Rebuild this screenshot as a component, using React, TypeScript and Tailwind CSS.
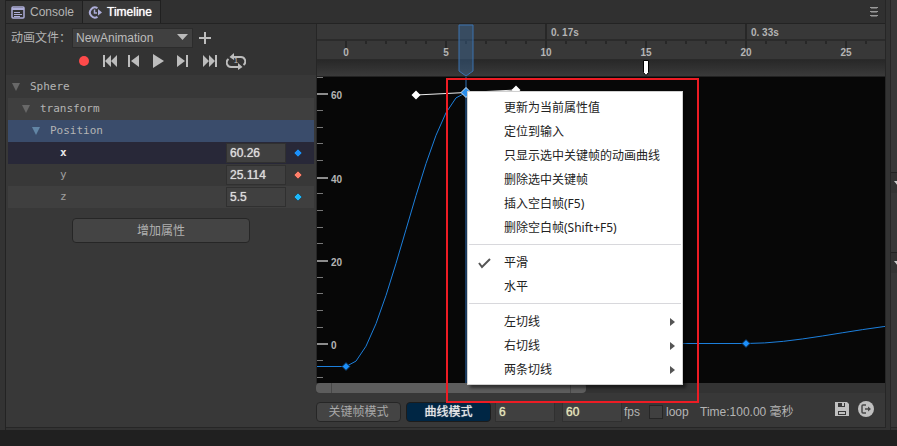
import { useEffect, useRef, useState } from "react";
import type { ReactNode } from "react";

const FRAME = 20;
const ORIGIN = 30;

const glow = "[text-shadow:0_0_1px_currentColor]";

function useSize() {
  const ref = useRef<SVGSVGElement>(null);
  const [size, setSize] = useState({ width: 0, height: 0 });
  useEffect(() => {
    const el = ref.current;
    if (!el) return;
    const measure = () => {
      const box = el.getBoundingClientRect();
      setSize({ width: box.width, height: box.height });
    };
    measure();
    const observer = new ResizeObserver(measure);
    observer.observe(el);
    return () => observer.disconnect();
  }, []);
  return { ref, ...size };
}

function range(n: number) {
  return Array.from({ length: Math.max(0, n) }, (_, i) => i);
}

function smooth(x0: number, y0: number, x1: number, y1: number, steps: number) {
  const pts: string[] = [];
  for (let i = 0; i <= steps; i++) {
    const t = i / steps;
    const k = 3 * t * t - 2 * t * t * t;
    pts.push(`${x0 + (x1 - x0) * t},${y0 + (y1 - y0) * k}`);
  }
  return pts.join(" ");
}

function Tab({ active, icon, children }: { active?: boolean; icon: ReactNode; children: ReactNode }) {
  return (
    <button
      role="tab"
      aria-selected={!!active}
      className={
        active
          ? `flex h-full items-center gap-1 border-x border-t border-[#202020] bg-[#383838] pr-2 pl-[5px] text-white ${glow}`
          : "flex h-full items-center gap-1 border-t border-[#202020] bg-[#333] pr-2 pl-[5px] text-[#b4b4b4]"
      }
    >
      {icon}
      {children}
    </button>
  );
}

function ToolButton({ label, className = "", children }: { label: string; className?: string; children: ReactNode }) {
  return (
    <button aria-label={label} className={`flex h-5 w-6 items-center justify-center text-[#bdbdbd] ${className}`}>
      {children}
    </button>
  );
}

function Fold({ name, className }: { name: string; className: string }) {
  return (
    <button className={`flex h-[22px] w-full items-center gap-[10px] ${className}`}>
      <svg width="8" height="8" viewBox="0 0 8 8" fill="currentColor" aria-hidden="true">
        <path d="M0 0h8L4 8z" />
      </svg>
      <span className="pt-px font-['DejaVu_Sans_Mono',monospace] text-[11px] text-[#b4b4b4]">{name}</span>
    </button>
  );
}

function Channel({ name, value, color, row, label }: { name: string; value: string; color: string; row: string; label: string }) {
  return (
    <div className={`flex h-[22px] items-center pr-[11px] pl-[52px] ${row}`}>
      <label htmlFor={`pos-${name}`} className={`flex-1 pt-px font-['DejaVu_Sans_Mono',monospace] text-[11px] ${label}`}>
        {name}
      </label>
      <input
        id={`pos-${name}`}
        defaultValue={value}
        className={`h-5 w-[60px] border border-[#303030] bg-[#404040] px-[3px] text-[#dcdcdc] outline-none ${glow}`}
      />
      <svg width="10" height="10" viewBox="0 0 10 10" className="ml-[7px]" aria-hidden="true">
        <path d="M5 1l4 4-4 4-4-4z" fill={color} stroke="#222" strokeWidth="0.500" />
      </svg>
    </div>
  );
}

function MenuItem({ children, checked, sub }: { children: ReactNode; checked?: boolean; sub?: boolean }) {
  return (
    <button role="menuitem" className="flex h-6 w-full items-center pr-[7px] text-left">
      <span className="flex w-9 items-center pl-[9px]">
        {checked && (
          <svg width="14" height="12" viewBox="0 0 14 12" fill="none" stroke="#555" strokeWidth="2" aria-hidden="true">
            <path d="M2 6l3 4 8-8" />
          </svg>
        )}
      </span>
      <span className="flex-1">{children}</span>
      {sub && (
        <svg width="5" height="8" viewBox="0 0 5 8" fill="#555" aria-hidden="true">
          <path d="M0 0l5 4-5 4z" />
        </svg>
      )}
    </button>
  );
}

function Ruler() {
  const { ref, width } = useSize();
  const frames = range(Math.floor((width - ORIGIN - 10) / FRAME) + 1);
  return (
    <svg ref={ref} className="block h-9 w-full bg-[#383838]" aria-label="ruler">
      <rect y="15" width="100%" height="2" fill="#2b2b2b" />
      <rect y="35" width="100%" height="1" fill="#2a2a2a" />
      {frames.map((f) => {
        const x = ORIGIN + f * FRAME;
        const second = f > 0 && f % 10 === 0;
        const major = f % 5 === 0;
        return (
          <g key={f}>
            <rect
              x={x - 1}
              y={second ? 0 : 17}
              width="2"
              height={second ? 24 : major ? 7 : 3}
              fill="#272727"
            />
            {major && (
              <text x={x} y="32" textAnchor="middle" className="fill-[#b4b4b4] text-[10px] font-bold">
                {f}
              </text>
            )}
            {second && (
              <text x={x + 5} y="12" className="fill-[#b4b4b4] text-[10px] font-bold">
                {(f / 60).toFixed(2).replace(".", ". ") + "s"}
              </text>
            )}
          </g>
        );
      })}
    </svg>
  );
}

function Curves() {
  const { ref, height } = useSize();
  const ticks = range(Math.floor(((height - 2) * 15) / 250) + 1);
  return (
    <svg ref={ref} className="block h-0 min-h-0 w-full flex-1 bg-[#070707]" aria-label="curve">
      {ticks.map((i) => {
        const major = i % 5 === 1;
        const y = Math.floor((i * 250) / 15);
        return (
          <g key={i}>
            <rect x="1" y={y} width={major ? 11 : 6} height={major ? 2 : 1} fill={major ? "#8c8c8c" : "#777"} />
            {major && (
              <text x="15" y={y + 6} className="fill-[#b4b4b4] text-[10px] font-bold">
                {60 - (i - 1) * 4}
              </text>
            )}
          </g>
        );
      })}
      <rect x="149" width="2" height="100%" fill="#1b3b5e" />
      <g fill="none" stroke="#1c7fdc">
        <path d="M0 289.500H30" />
        <polyline points={smooth(30, 289.5, 150, 15.5, 12)} />
        <path d="M150 15.500C240 15.500 300 266.500 360 266.500H430C480 266.500 530 253 590 247" />
      </g>
      <path d="M100 18L150 15.500L200 13" stroke="#eee" fill="none" />
      <path d="M100 13.500l4.500 4.500-4.500 4.500-4.500-4.500zM200 8.500l4.500 4.500-4.500 4.500-4.500-4.500z" fill="#fff" />
      <path d="M150 10.500l5 5-5 5-5-5z" fill="#2a8fee" stroke="#d8e8f8" />
      <path d="M30 285.500l4 4-4 4-4-4zM430 262.500l4 4-4 4-4-4z" fill="#1c90fb" stroke="#0b2846" />
    </svg>
  );
}

function ModeButton({ on, onClick, children }: { on: boolean; onClick: () => void; children: ReactNode }) {
  return (
    <button
      onClick={onClick}
      aria-pressed={on}
      className={
        on
          ? `h-5 w-[85px] rounded border border-[#1c1c1c] bg-[#002644] leading-none text-[#e8e8e8] ${glow}`
          : "h-5 w-[85px] rounded border border-[#262626] bg-[#444] leading-none text-[#a8a8a8]"
      }
    >
      {children}
    </button>
  );
}

function SidePanel({ className }: { className: string }) {
  return (
    <div className={`overflow-hidden border-t border-[#222] ${className}`}>
      <div className="flex h-5 items-center bg-[#333] pl-[3px]">
        <svg width="8" height="5" viewBox="0 0 8 5" className="shrink-0" fill="#ccc" aria-hidden="true">
          <path d="M0 0h8L4 5z" />
        </svg>
      </div>
    </div>
  );
}

export default function App() {
  const [curveMode, setCurveMode] = useState(true);
  const [loop, setLoop] = useState(false);

  return (
    <div className="flex h-screen flex-col overflow-hidden bg-[#202020] pb-4 font-['Liberation_Sans','Noto_Sans_CJK_SC',sans-serif] text-xs whitespace-nowrap text-[#b4b4b4]">
      <div className="flex min-h-0 flex-1 bg-[#333]">
        <div className="w-[6px] shrink-0 border-r border-[#232323]" />

        <main className="mb-[2px] flex min-w-0 flex-1 flex-col border-r border-b border-[#262626]">
          <header className="flex h-6 shrink-0 items-center justify-between border-b border-[#232323] bg-[#303030] pr-[7px]">
            <div role="tablist" className="flex h-full">
              <Tab
                icon={
                  <svg width="15" height="13" viewBox="0 0 15 13" fill="none" stroke="#adadd8" strokeWidth="1.500" aria-hidden="true">
                    <rect x="1" y="1" width="12" height="11" rx="1" />
                    <path d="M1 3h12" strokeWidth="2" />
                    <path d="M3 6.500h6M3 8.500h8M3 10.500h6" strokeWidth="1" />
                  </svg>
                }
              >
                Console
              </Tab>
              <Tab
                active
                icon={
                  <svg width="15" height="13" viewBox="0 0 15 13" fill="none" stroke="#adadd8" strokeWidth="2" aria-hidden="true">
                    <path d="M9.500 2.200A5 5 0 1 0 9.500 10.800" />
                    <path d="M6.500 3.500V7H9" strokeWidth="1.500" />
                    <path d="M10 3l4 3.500-4 3z" fill="#adadd8" stroke="none" />
                  </svg>
                }
              >
                Timeline
              </Tab>
            </div>
            <button aria-label="panel menu">
              <svg width="8" height="10" viewBox="0 0 8 10" stroke="#999" aria-hidden="true">
                <path d="M0 .5h8M0 4.500h8M0 8.500h8" strokeWidth="1" />
                <path d="M1 1.500h6M1 5.500h6M1 9.500h6" stroke="#666" />
              </svg>
            </button>
          </header>

          <div className="flex min-h-0 flex-1 bg-[#383838]">
            <aside className="flex w-[310px] shrink-0 flex-col">
              <div className="h-[51px] bg-[#333]">
                <div className="flex h-7 items-center pl-[5px]">
                  <label htmlFor="clip" className="w-[61px]">
                    动画文件：
                  </label>
                  <div className="relative">
                    <select
                      id="clip"
                      className="block h-5 w-[121px] appearance-none border border-[#2c2c2c] bg-[#404040] px-[3px] text-[#bcbcbc] outline-none"
                    >
                      <option>NewAnimation</option>
                    </select>
                    <svg width="11" height="6" viewBox="0 0 11 6" fill="#bbb" className="pointer-events-none absolute top-[6px] right-[5px]" aria-hidden="true">
                      <path d="M0 0h11L5.500 6z" />
                    </svg>
                  </div>
                  <ToolButton label="new clip">
                    <svg width="12" height="12" viewBox="0 0 12 12" stroke="currentColor" strokeWidth="2" aria-hidden="true">
                      <path d="M0 6h12M6 0v12" />
                    </svg>
                  </ToolButton>
                </div>
                <div className="flex h-[18px] items-center pl-[66px]">
                  <ToolButton label="record">
                    <svg width="10" height="10" viewBox="0 0 10 10" aria-hidden="true">
                      <circle cx="5" cy="5" r="5" fill="#fe4a4a" />
                    </svg>
                  </ToolButton>
                  <ToolButton label="first frame" className="ml-0.5">
                    <svg width="14" height="12" viewBox="0 0 14 12" fill="currentColor" aria-hidden="true">
                      <path d="M0 0h2v12H0zM8 0v12L2 6zM14 0v12L8 6z" />
                    </svg>
                  </ToolButton>
                  <ToolButton label="previous frame">
                    <svg width="12" height="12" viewBox="0 0 12 12" fill="currentColor" aria-hidden="true">
                      <path d="M0 0h2v12H0zM11 0v12L3 6z" />
                    </svg>
                  </ToolButton>
                  <ToolButton label="play">
                    <svg width="12" height="14" viewBox="0 0 12 14" fill="currentColor" aria-hidden="true">
                      <path d="M1 0l11 7L1 14z" />
                    </svg>
                  </ToolButton>
                  <ToolButton label="next frame">
                    <svg width="12" height="12" viewBox="0 0 12 12" fill="currentColor" aria-hidden="true">
                      <path d="M10 0h2v12h-2zM1 0v12l8-6z" />
                    </svg>
                  </ToolButton>
                  <ToolButton label="last frame" className="ml-1">
                    <svg width="14" height="12" viewBox="0 0 14 12" fill="currentColor" aria-hidden="true">
                      <path d="M12 0h2v12h-2zM0 0v12l6-6zM6 0v12l6-6z" />
                    </svg>
                  </ToolButton>
                  <ToolButton label="loop once" className="relative ml-0.5">
                    <svg width="20" height="18" viewBox="0 0 20 18" fill="none" stroke="currentColor" strokeWidth="2" aria-hidden="true">
                      <path d="M6 5h8a4.500 4.500 0 0 1 3.500 8" />
                      <path d="M14 15H6a4.500 4.500 0 0 1-3.500-8" />
                      <path d="M8 1v7L3.500 5zM12 11v7l4.500-3z" fill="currentColor" stroke="none" />
                    </svg>
                    <span className="absolute inset-0 text-[8px] leading-5">1</span>
                  </ToolButton>
                </div>
              </div>

              <div className="px-[2px] pt-px">
                <Fold name="Sphere" className="bg-[#383838] pl-1 text-[#686868]" />
                <Fold name="transform" className="bg-[#3f3f3f] pl-[14px] text-[#686868]" />
                <Fold name="Position" className="bg-[#3a4c6b] pl-6 text-[#6285a5]" />
                <Channel name="x" value="60.26" color="#1c90fb" row="bg-[#282838]" label="font-bold text-[#e8e8e8]" />
                <Channel name="y" value="25.114" color="#fe7f6a" row="bg-[#383838]" label="text-[#a0a0a0]" />
                <Channel name="z" value="5.5" color="#1cb8fb" row="bg-[#3f3f3f]" label="text-[#a0a0a0]" />
              </div>
              <button className="mt-[10px] h-[25px] w-[178px] self-center rounded border border-[#262626] bg-[#444] text-[#b0b0b0]">
                增加属性
              </button>
            </aside>

            <section className="relative flex min-w-0 flex-1 flex-col">
              <div className="flex min-h-0 flex-1 flex-col overflow-hidden border-l border-[#262626]">
                <div className="-ml-px flex min-h-0 flex-1 flex-col">
                  <Ruler />
                  <div className="h-4 shrink-0 bg-linear-to-b from-[#282828] to-[#3a3a3a]" />
                  <div className="h-px shrink-0 bg-[#222]" />
                  <Curves />
                </div>
              </div>
              <div className="h-[10px] shrink-0 bg-[#333]">
                <div className="h-full w-[270px] rounded bg-[#5d5d5d] px-[15px]">
                  <div className="h-full border-x border-[#484848]" />
                </div>
              </div>

              <footer className="flex h-[34px] shrink-0 items-center pt-[3px]">
                <ModeButton on={!curveMode} onClick={() => setCurveMode(false)}>
                  关键帧模式
                </ModeButton>
                <span className="w-[5px]" />
                <ModeButton on={curveMode} onClick={() => setCurveMode(true)}>
                  曲线模式
                </ModeButton>
                <input
                  aria-label="frame"
                  defaultValue="6"
                  className={`ml-1 h-5 w-[60px] border border-[#303030] bg-[#404040] px-[3px] text-[#e4e4b8] outline-none ${glow}`}
                />
                <input
                  id="fps"
                  defaultValue="60"
                  className={`ml-[7px] h-5 w-[60px] border border-[#303030] bg-[#404040] px-[3px] text-[#e4e4b8] outline-none ${glow}`}
                />
                <label htmlFor="fps" className="ml-[2px] w-[25px]">
                  fps
                </label>
                <input
                  id="loop"
                  type="checkbox"
                  checked={loop}
                  onChange={(e) => setLoop(e.target.checked)}
                  className="size-[14px] appearance-none border border-[#262626] bg-[#404040] checked:bg-[#888]"
                />
                <label htmlFor="loop" className="ml-[3px] w-[34px]">
                  loop
                </label>
                <span className="flex-1">Time:100.00 毫秒</span>
                <button aria-label="save" className="mb-[5px]">
                  <svg width="14" height="14" viewBox="0 0 14 14" aria-hidden="true">
                    <path fillRule="evenodd" fill="#c0c0c0" d="M0 0h12l2 2v12H0zM3 1v4h7V1zM3 9v4h8V9z" />
                    <path fill="#c0c0c0" d="M7 1h2v3H7zM4 10h6v2H4z" />
                  </svg>
                </button>
                <button aria-label="exit" className="mr-[11px] mb-[5px] ml-[9px]">
                  <svg width="16" height="16" viewBox="0 0 16 16" fill="none" stroke="#484848" strokeWidth="1.500" aria-hidden="true">
                    <circle cx="8" cy="8" r="8" fill="#c0c0c0" stroke="none" />
                    <path d="M8 4H5Q4 4 4 5v6q0 1 1 1h3" />
                    <path d="M7 8h5" />
                    <path d="M10 5.500l3 2.500-3 2.500z" fill="#484848" stroke="none" />
                  </svg>
                </button>
              </footer>

              <svg width="16" height="54" viewBox="0 0 16 54" className="absolute top-0 left-[142px]" aria-hidden="true">
                <path d="M1 1h14v46l-7 5-7-5z" fill="#3a72b0" fillOpacity="0.35" stroke="#3a72b0" />
              </svg>
              <svg width="6" height="16" viewBox="0 0 6 16" className="absolute top-9 left-[327px]" aria-hidden="true">
                <path d="M.5 .5h5v12L3 15.500.5 12.500z" fill="#fff" stroke="#000" />
              </svg>

              <div
                role="menu"
                className="absolute top-[67px] left-[151px] w-[216px] border border-[#d0d0d0] bg-white pt-1 pb-[2px] font-['Noto_Sans','Noto_Sans_CJK_SC',sans-serif] text-[#222] shadow-[3px_3px_3px_rgba(0,0,0,0.5)]"
              >
                <MenuItem>更新为当前属性值</MenuItem>
                <MenuItem>定位到输入</MenuItem>
                <MenuItem>只显示选中关键帧的动画曲线</MenuItem>
                <MenuItem>删除选中关键帧</MenuItem>
                <MenuItem>插入空白帧(F5)</MenuItem>
                <MenuItem>删除空白帧(Shift+F5)</MenuItem>
                <hr className="mx-px mt-1 mb-[6px] border-[#d8d8dc]" />
                <MenuItem checked>平滑</MenuItem>
                <MenuItem>水平</MenuItem>
                <hr className="mx-px mt-1 mb-[6px] border-[#d8d8dc]" />
                <MenuItem sub>左切线</MenuItem>
                <MenuItem sub>右切线</MenuItem>
                <MenuItem sub>两条切线</MenuItem>
              </div>
              <div className="pointer-events-none absolute top-[54px] left-[130px] h-[325px] w-[253px] border-2 border-[#ed1c24]" />
            </section>
          </div>
        </main>

        <div className="w-[5px] shrink-0 border-r border-[#262626]" />
        <div className="mb-[2px] flex w-[6px] shrink-0 flex-col overflow-hidden border-b border-[#262626] bg-[#383838]">
          <div className="h-[172px] shrink-0" />
          <SidePanel className="h-20 shrink-0" />
          <SidePanel className="flex-1" />
        </div>
      </div>
    </div>
  );
}
